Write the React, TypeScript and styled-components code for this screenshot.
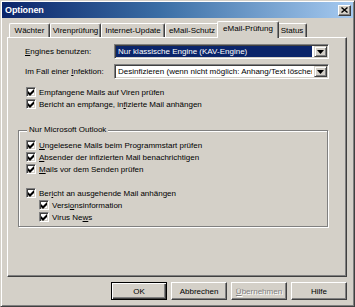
import React from "react";
import styled, { createGlobalStyle } from "styled-components";

const Global = createGlobalStyle`
  html, body { margin: 0; padding: 0; background: #d4d0c8; }
  body { font-family: "Liberation Sans", Arial, sans-serif; font-size: 8px; color: #000; }
  * { box-sizing: border-box; }
`;

const Window = styled.div`
  width: 355px;
  height: 307px;
  background: #d4d0c8;
  border-top: 1px solid #d4d0c8;
  border-left: 1px solid #d4d0c8;
  border-right: 1px solid #404040;
  border-bottom: 1px solid #404040;
  box-shadow: inset 1px 1px 0 #fff, inset -1px -1px 0 #808080;
  padding: 1px 1px 2px 1px;
  display: flex;
  flex-direction: column;
`;

const TitleBar = styled.div`
  height: 16px;
  display: flex;
  align-items: center;
  justify-content: space-between;
  padding: 0 2px 0 3px;
  background: linear-gradient(to right, #0a246a 0%, #3a6ea5 45%, #a6caf0 100%);
`;

const Title = styled.span`
  color: #fff;
  font-weight: bold;
  font-size: 9px;
  letter-spacing: -0.1px;
`;

const CloseBtn = styled.div`
  width: 13px;
  height: 11px;
  background: #d4d0c8;
  border-top: 1px solid #fff;
  border-left: 1px solid #fff;
  border-right: 1px solid #404040;
  border-bottom: 1px solid #404040;
  box-shadow: inset -1px -1px 0 #808080;
  display: flex;
  align-items: center;
  justify-content: center;
`;

const Body = styled.div`
  flex: 1;
  display: flex;
  flex-direction: column;
  padding: 3px 6px 0 5px;
`;

const TabStrip = styled.div`
  display: flex;
  align-items: flex-end;
  height: 16px;
  padding-left: 2px;
  position: relative;
  z-index: 2;
`;

const Tab = styled.div<{ $w: number; $active?: boolean }>`
  width: ${(p) => p.$w}px;
  height: ${(p) => (p.$active ? 17 : 14)}px;
  margin: ${(p) => (p.$active ? "0 -2px -1px -2px" : "0")};
  padding-top: ${(p) => (p.$active ? 2 : 2)}px;
  background: #d4d0c8;
  border-top: 1px solid #fff;
  border-left: 1px solid #fff;
  border-right: 1px solid #404040;
  box-shadow: inset -1px 0 0 #808080;
  border-top-left-radius: 2px;
  border-top-right-radius: 2px;
  text-align: center;
  white-space: nowrap;
  line-height: 10px;
  position: relative;
  z-index: ${(p) => (p.$active ? 3 : 1)};
`;

const Panel = styled.div`
  height: 240px;
  border-top: 1px solid #fff;
  border-left: 1px solid #fff;
  border-right: 1px solid #404040;
  border-bottom: 1px solid #404040;
  box-shadow: inset -1px -1px 0 #808080;
  padding: 6px 0 0 10px;
  display: flex;
  flex-direction: column;
`;

const FieldRow = styled.div<{ $mt?: number }>`
  display: grid;
  grid-template-columns: 89px 215px;
  align-items: center;
  height: 15px;
  margin-left: 7px;
  margin-top: ${(p) => p.$mt ?? 0}px;
`;

const Label = styled.span`
  white-space: nowrap;
`;

const Combo = styled.div`
  height: 15px;
  background: #fff;
  border-top: 1px solid #808080;
  border-left: 1px solid #808080;
  border-right: 1px solid #fff;
  border-bottom: 1px solid #fff;
  box-shadow: inset 1px 1px 0 #404040, inset -1px -1px 0 #d4d0c8;
  padding: 1px;
  display: flex;
  gap: 2px;
`;

const ComboValue = styled.div<{ $selected?: boolean }>`
  flex: 1;
  overflow: hidden;
  white-space: nowrap;
  line-height: 11px;
  padding-left: 2px;
  background: ${(p) => (p.$selected ? "#0a246a" : "transparent")};
  color: ${(p) => (p.$selected ? "#fff" : "#000")};
`;

const ComboArrow = styled.div`
  width: 13px;
  height: 11px;
  background: #d4d0c8;
  border-top: 1px solid #d4d0c8;
  border-left: 1px solid #d4d0c8;
  border-right: 1px solid #404040;
  border-bottom: 1px solid #404040;
  box-shadow: inset 1px 1px 0 #fff, inset -1px -1px 0 #808080;
  display: flex;
  align-items: center;
  justify-content: center;
`;

const CheckList = styled.div<{ $mt?: number }>`
  margin-top: ${(p) => p.$mt ?? 0}px;
  margin-left: 8px;
  display: flex;
  flex-direction: column;
`;

const CheckRow = styled.div<{ $indent?: number }>`
  display: flex;
  align-items: center;
  height: 12px;
  gap: 3px;
  padding-left: ${(p) => p.$indent ?? 0}px;
  white-space: nowrap;
`;

const Spacer = styled.div`
  height: 12px;
`;

const Box = styled.span`
  width: 10px;
  height: 10px;
  flex: 0 0 10px;
  background: #fff;
  border-top: 1px solid #808080;
  border-left: 1px solid #808080;
  border-right: 1px solid #fff;
  border-bottom: 1px solid #fff;
  box-shadow: inset 1px 1px 0 #404040, inset -1px -1px 0 #d4d0c8;
  display: flex;
  align-items: center;
  justify-content: center;
`;

const Group = styled.fieldset`
  margin: 15px 0 0 0;
  width: 310px;
  padding: 4px 0 3px 7px;
  border: 1px solid #808080;
  box-shadow: 1px 1px 0 #fff, inset 1px 1px 0 #fff;
  min-width: 0;
`;

const Legend = styled.legend`
  margin-left: 1px;
  padding: 0 2px;
  line-height: 10px;
  background: #d4d0c8;
`;

const GroupList = styled.div`
  display: flex;
  flex-direction: column;
`;

const ButtonRow = styled.div`
  display: flex;
  justify-content: flex-end;
  gap: 4px;
  margin-top: 5px;
`;

const Button = styled.div<{ $default?: boolean; $disabled?: boolean }>`
  width: 56px;
  height: 18px;
  background: #d4d0c8;
  display: flex;
  align-items: center;
  justify-content: center;
  color: ${(p) => (p.$disabled ? "#808080" : "#000")};
  text-shadow: ${(p) => (p.$disabled ? "1px 1px 0 #fff" : "none")};
  border-top: 1px solid ${(p) => (p.$default ? "#000" : "#fff")};
  border-left: 1px solid ${(p) => (p.$default ? "#000" : "#fff")};
  border-right: 1px solid ${(p) => (p.$default ? "#000" : "#404040")};
  border-bottom: 1px solid ${(p) => (p.$default ? "#000" : "#404040")};
  box-shadow: ${(p) =>
    p.$default
      ? "inset 1px 1px 0 #fff, inset -1px -1px 0 #404040, inset -2px -2px 0 #808080"
      : "inset -1px -1px 0 #808080"};
`;

const U = styled.span`
  text-decoration: underline;
`;

const Check = () => (
  <svg width="7" height="7" viewBox="0 0 7 7">
    <path d="M0 2 L2 4 L6 0 L6 3 L2 7 L0 5 Z" fill="#000" />
  </svg>
);

const Checkbox: React.FC<{ children: React.ReactNode; indent?: number }> = ({ children, indent }) => (
  <CheckRow $indent={indent}>
    <Box>
      <Check />
    </Box>
    <span>{children}</span>
  </CheckRow>
);

const DownArrow = () => (
  <svg width="7" height="4" viewBox="0 0 7 4">
    <path d="M0 0 H7 L3.5 4 Z" fill="#000" />
  </svg>
);

const tabs: { label: string; w: number; active?: boolean }[] = [
  { label: "Wächter", w: 41 },
  { label: "Virenprüfung", w: 51 },
  { label: "Internet-Update", w: 64 },
  { label: "eMail-Schutz", w: 54 },
  { label: "eMail-Prüfung", w: 62, active: true },
  { label: "Status", w: 30 },
];

export default function App() {
  return (
    <>
      <Global />
      <Window>
        <TitleBar>
          <Title>Optionen</Title>
          <CloseBtn>
            <svg width="7" height="6" viewBox="0 0 7 6">
              <path d="M0.5 0.5 L6.5 5.5 M6.5 0.5 L0.5 5.5" stroke="#000" strokeWidth="1.4" />
            </svg>
          </CloseBtn>
        </TitleBar>
        <Body>
          <TabStrip>
            {tabs.map((t) => (
              <Tab key={t.label} $w={t.w} $active={t.active}>
                {t.label}
              </Tab>
            ))}
          </TabStrip>
          <Panel>
            <FieldRow>
              <Label>
                <U>E</U>ngines benutzen:
              </Label>
              <Combo>
                <ComboValue $selected>Nur klassische Engine (KAV-Engine)</ComboValue>
                <ComboArrow>
                  <DownArrow />
                </ComboArrow>
              </Combo>
            </FieldRow>
            <FieldRow $mt={5}>
              <Label>
                Im Fall einer <U>I</U>nfektion:
              </Label>
              <Combo>
                <ComboValue>Desinfizieren (wenn nicht möglich: Anhang/Text löschen)</ComboValue>
                <ComboArrow>
                  <DownArrow />
                </ComboArrow>
              </Combo>
            </FieldRow>
            <CheckList $mt={7}>
              <Checkbox>Empfangene Mails auf Viren prüfen</Checkbox>
              <Checkbox>
                Bericht an empfange, in<U>f</U>izierte Mail anhängen
              </Checkbox>
            </CheckList>
            <Group>
              <Legend>Nur Microsoft Outlook</Legend>
              <GroupList>
                <Checkbox>
                  <U>U</U>ngelesene Mails beim Programmstart prüfen
                </Checkbox>
                <Checkbox>
                  <U>A</U>bsender der infizierten Mail benachrichtigen
                </Checkbox>
                <Checkbox>
                  <U>M</U>ails vor dem Senden prüfen
                </Checkbox>
                <Spacer />
                <Checkbox>
                  Ber<U>i</U>cht an ausgehende Mail anhängen
                </Checkbox>
                <Checkbox indent={13}>
                  Versi<U>o</U>nsinformation
                </Checkbox>
                <Checkbox indent={13}>
                  Virus Ne<U>w</U>s
                </Checkbox>
              </GroupList>
            </Group>
          </Panel>
          <ButtonRow>
            <Button $default>OK</Button>
            <Button>Abbrechen</Button>
            <Button $disabled>
              <span>
                <U>Ü</U>bernehmen
              </span>
            </Button>
            <Button>Hilfe</Button>
          </ButtonRow>
        </Body>
      </Window>
    </>
  );
}
